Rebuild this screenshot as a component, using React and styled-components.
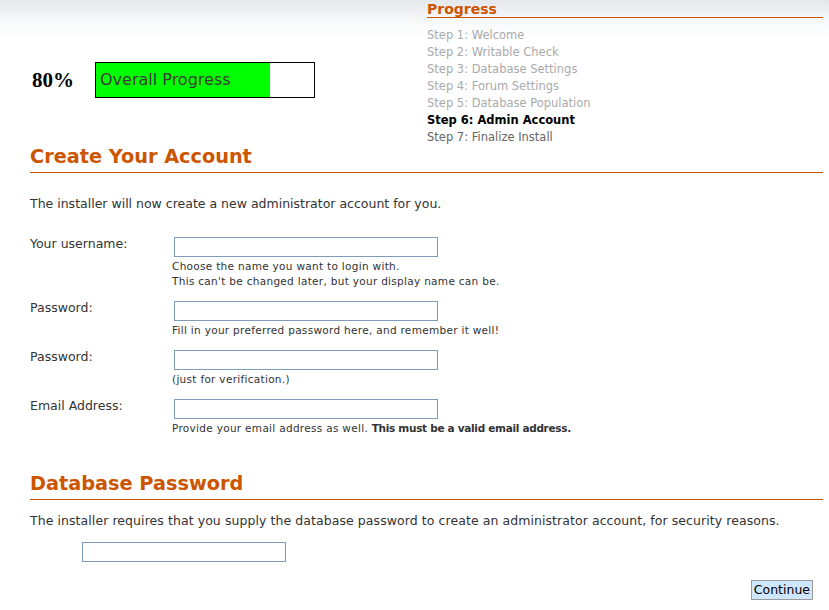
import React from "react";
import styled, { createGlobalStyle } from "styled-components";

const GlobalStyle = createGlobalStyle`
  html, body {
    margin: 0;
    padding: 0;
    background: #fff;
  }
  body {
    font-family: "DejaVu Sans", Verdana, sans-serif;
    color: #333;
  }
`;

const steps = [
  { label: "Step 1: Welcome", state: "done" },
  { label: "Step 2: Writable Check", state: "done" },
  { label: "Step 3: Database Settings", state: "done" },
  { label: "Step 4: Forum Settings", state: "done" },
  { label: "Step 5: Database Population", state: "done" },
  { label: "Step 6: Admin Account", state: "current" },
  { label: "Step 7: Finalize Install", state: "todo" },
];

const fields = [
  {
    label: "Your username:",
    type: "text",
    help: [
      "Choose the name you want to login with.",
      "This can't be changed later, but your display name can be.",
    ],
  },
  {
    label: "Password:",
    type: "password",
    help: ["Fill in your preferred password here, and remember it well!"],
  },
  {
    label: "Password:",
    type: "password",
    help: ["(just for verification.)"],
  },
  {
    label: "Email Address:",
    type: "text",
    help: [
      <>
        Provide your email address as well.{" "}
        <strong>This must be a valid email address.</strong>
      </>,
    ],
  },
];

export default function App() {
  const percent = 80;

  return (
    <Page>
      <GlobalStyle />
      <Header>
        <Overall>
          <Percent>{percent}%</Percent>
          <Bar>
            <BarFill style={{ width: `${percent}%` }} />
            <BarLabel>Overall Progress</BarLabel>
          </Bar>
        </Overall>
        <Sidebar>
          <SidebarTitle>Progress</SidebarTitle>
          <StepList>
            {steps.map((s) => (
              <Step key={s.label} $state={s.state}>
                {s.label}
              </Step>
            ))}
          </StepList>
        </Sidebar>
      </Header>

      <Section>
        <Heading>Create Your Account</Heading>
        <Intro>The installer will now create a new administrator account for you.</Intro>
        <Form>
          {fields.map((f, i) => (
            <Row key={i}>
              <Label>{f.label}</Label>
              <Field>
                <Input type={f.type} />
                <Help>
                  {f.help.map((h, j) => (
                    <div key={j}>{h}</div>
                  ))}
                </Help>
              </Field>
            </Row>
          ))}
        </Form>
      </Section>

      <Section $db>
        <Heading>Database Password</Heading>
        <Intro $db>
          The installer requires that you supply the database password to create an
          administrator account, for security reasons.
        </Intro>
        <DbInputWrap>
          <Input type="password" $width={204} />
        </DbInputWrap>
        <Actions>
          <Button type="button">Continue</Button>
        </Actions>
      </Section>
    </Page>
  );
}

const Page = styled.div`
  width: 829px;
  min-height: 610px;
  box-sizing: border-box;
  padding: 0 6px 0 30px;
  background: linear-gradient(to bottom, #e4e7eb 0px, #f7f8fa 20px, #ffffff 40px) no-repeat;
`;

const Header = styled.div`
  display: flex;
  justify-content: space-between;
  align-items: flex-start;
`;

const Overall = styled.div`
  display: flex;
  align-items: center;
  margin-top: 62px;
  margin-left: 2px;
  gap: 22px;
`;

const Percent = styled.div`
  font-family: "Liberation Serif", "Times New Roman", serif;
  font-weight: bold;
  font-size: 21px;
  color: #000;
  width: 41px;
`;

const Bar = styled.div`
  position: relative;
  width: 218px;
  height: 34px;
  border: 1px solid #000;
  background: #fff;
`;

const BarFill = styled.div`
  position: absolute;
  left: 0;
  top: 0;
  bottom: 0;
  background: #00ff00;
`;

const BarLabel = styled.div`
  position: relative;
  padding-left: 4px;
  line-height: 34px;
  font-size: 16px;
  color: #3a3a3a;
`;

const Sidebar = styled.div`
  width: 396px;
  padding-top: 1px;
`;

const SidebarTitle = styled.div`
  font-size: 14px;
  font-weight: bold;
  color: #cc5500;
  line-height: 16px;
  border-bottom: 1px solid #cc5500;
`;

const StepList = styled.div`
  padding-top: 9px;
`;

const Step = styled.div`
  font-size: 11.5px;
  line-height: 17px;
  font-weight: ${(p) => (p.$state === "current" ? "bold" : "normal")};
  color: ${(p) =>
    p.$state === "current" ? "#000" : p.$state === "done" ? "#aaa" : "#666"};
`;

const Section = styled.div`
  margin-top: ${(p) => (p.$db ? "37px" : "0px")};
`;

const Heading = styled.h2`
  margin: 0;
  font-size: 19.3px;
  font-weight: bold;
  color: #cc5500;
  line-height: 22px;
  padding-bottom: 4px;
  border-bottom: 1px solid #cc5500;
`;

const Intro = styled.p`
  margin: ${(p) => (p.$db ? "13px 0 0" : "23px 0 0")};
  font-size: 12.5px;
  line-height: 15px;
  letter-spacing: ${(p) => (p.$db ? "0.07px" : "0")};
`;

const Form = styled.div`
  margin-top: 26px;
  display: flex;
  flex-direction: column;
  gap: 12px;
`;

const Row = styled.div`
  display: flex;
  align-items: flex-start;
`;

const Label = styled.div`
  width: 144px;
  font-size: 12.5px;
  line-height: 15px;
  margin-top: -1px;
`;

const Field = styled.div`
  display: flex;
  flex-direction: column;
  margin-left: -2px;
`;

const Input = styled.input`
  box-sizing: border-box;
  width: ${(p) => p.$width || 264}px;
  height: 20px;
  margin: 0 0 0 ${(p) => (p.$width ? 0 : 2)}px;
  border: 1px solid #7f9db9;
  padding: 1px 3px;
  font-family: inherit;
  font-size: 12px;
  outline: none;
  background: #fff;
`;

const Help = styled.div`
  margin-top: 2px;
  font-size: 10.5px;
  letter-spacing: 0.3px;
  line-height: 15px;
  color: #333;
  strong {
    font-weight: bold;
    letter-spacing: -0.3px;
  }
`;

const DbInputWrap = styled.div`
  margin-top: 13px;
  padding-left: 52px;
`;

const Actions = styled.div`
  display: flex;
  justify-content: flex-end;
  margin-top: 18px;
  padding-right: 10px;
`;

const Button = styled.button`
  font-family: "DejaVu Sans", Verdana, sans-serif;
  font-size: 12.5px;
  color: #000;
  background: #cfe6ff;
  border: 1px solid #9a9a9a;
  padding: 1px 2px;
  height: 20px;
  line-height: 16px;
  cursor: pointer;
`;
